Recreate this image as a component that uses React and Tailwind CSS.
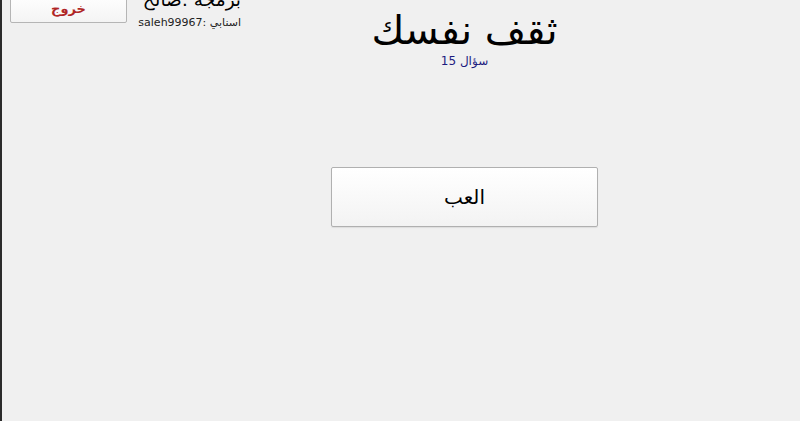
import React from 'react';

const App = () => {
    return (
        <div className="min-h-screen w-full bg-[#f0f0f0] border-l-2 border-[#2b2b2b] flex overflow-hidden" style={{ fontFamily: '"DejaVu Sans", sans-serif' }}>
            {/* left column: logout */}
            <div className="w-[127px] shrink-0 pl-[8px] -mt-[6px]">
                <button className="w-[117px] h-[29px] bg-gradient-to-b from-white to-[#f4f4f4] border border-[#b5b5b5] rounded-[2px] text-[#b02626] text-[13px] font-bold leading-none flex items-center justify-center">
                    <span dir="rtl">خروج</span>
                </button>
            </div>

            {/* main column */}
            <div className="relative flex-1 flex flex-col items-center">
                {/* credits */}
                <div className="absolute right-[559px] -top-[12px] flex flex-col items-end">
                    <div dir="rtl" className="text-[18.5px] leading-[24px] text-black whitespace-nowrap">برمجة :صالح</div>
                    <div dir="rtl" className="text-[11px] leading-[14px] text-[#222] mt-[4px] whitespace-nowrap">اسنابي :saleh99967</div>
                </div>

                <h1 dir="rtl" className="mt-[6px] text-[40px] leading-[48px] text-black">ثقف نفسك</h1>
                <div dir="rtl" className="text-[12px] leading-[14px] text-[#1c1c80]">سؤال 15</div>

                <button className="mt-[99px] w-[267px] h-[60px] bg-gradient-to-b from-white to-[#f3f3f3] border border-[#b0b0b0] rounded-[2px] shadow-[0_1px_1px_rgba(0,0,0,0.08)] text-[20px] text-black flex items-center justify-center">
                    <span dir="rtl">العب</span>
                </button>
            </div>
        </div>
    );
};

export default App;
